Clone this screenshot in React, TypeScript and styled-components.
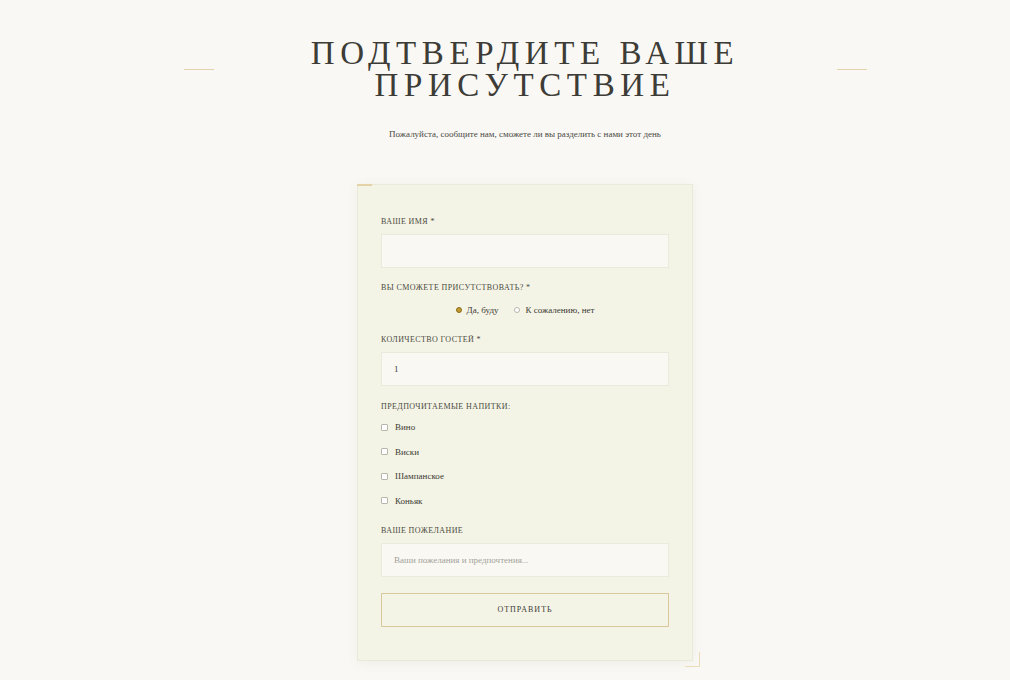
import React from "react";
import styled, { createGlobalStyle } from "styled-components";

const Global = createGlobalStyle`
  html, body { margin: 0; padding: 0; background: #f9f8f4; }
  body { font-family: "Liberation Serif", "Times New Roman", serif; color: #3b3a35; }
  * { box-sizing: border-box; }
`;

const Page = styled.main`
  min-height: 680px;
  padding: 37px 0 0 40px;
  display: flex;
  flex-direction: column;
  align-items: center;
`;

const Header = styled.header`
  display: flex;
  align-items: center;
  gap: 30px;
`;

const Rule = styled.span`
  display: block;
  width: 30px;
  height: 1px;
  background: #e2d3ac;
`;

const Title = styled.h1`
  margin: 0;
  width: 563px;
  text-align: center;
  font-family: "Liberation Serif", serif;
  font-weight: 400;
  font-size: 33px;
  line-height: 32px;
  letter-spacing: 5.6px;
  text-transform: uppercase;
  color: #3d3c37;
`;

const Subtitle = styled.p`
  margin: 26px 0 0;
  font-size: 9px;
  line-height: 14px;
  color: #4a4a44;
`;

const Card = styled.form`
  position: relative;
  margin-top: 43px;
  width: 336px;
  background: #f4f4e6;
  border: 1px solid #ebe9dc;
  box-shadow: 0 2px 10px rgba(120, 110, 80, 0.08);
  padding: 32px 23px 33px;
  display: flex;
  flex-direction: column;

  &::before {
    content: "";
    position: absolute;
    left: -1px;
    top: -1px;
    width: 15px;
    height: 2px;
    background: #e3d3a6;
  }
  &::after {
    content: "";
    position: absolute;
    right: -8px;
    bottom: -7px;
    width: 14px;
    height: 14px;
    border-right: 1px solid #eadcb8;
    border-bottom: 1px solid #eadcb8;
  }
`;

const Group = styled.div<{ $gap?: number }>`
  display: flex;
  flex-direction: column;
  margin-bottom: ${(p) => p.$gap ?? 15}px;
`;

const Label = styled.label`
  font-size: 8px;
  line-height: 10px;
  letter-spacing: 0.4px;
  text-transform: uppercase;
  color: #4a4a40;
  margin-bottom: 7px;
`;

const Field = styled.div<{ $placeholder?: boolean }>`
  height: 34px;
  background: #f9f8f3;
  border: 1px solid #ebe9dc;
  padding: 0 12px;
  display: flex;
  align-items: center;
  font-size: 9px;
  color: ${(p) => (p.$placeholder ? "#a3a29a" : "#3b3a35")};
`;

const RadioRow = styled.div`
  margin-top: 3px;
  display: flex;
  justify-content: center;
  gap: 16px;
  height: 14px;
  align-items: center;
`;

const Option = styled.span`
  display: inline-flex;
  align-items: center;
  gap: 5px;
  font-size: 9px;
  color: #3b3a35;
`;

const Radio = styled.span<{ $on?: boolean }>`
  width: 6px;
  height: 6px;
  border-radius: 50%;
  border: 1px solid ${(p) => (p.$on ? "#8a6f1e" : "#b8b6ad")};
  background: ${(p) => (p.$on ? "#c29a2e" : "#fff")};
`;

const Checks = styled.div`
  margin-top: 1px;
  display: flex;
  flex-direction: column;
  gap: 10.5px;
  padding-bottom: 3px;
`;

const Check = styled.span`
  width: 7px;
  height: 7px;
  border: 1px solid #b8b6ad;
  border-radius: 1px;
  background: #fff;
`;

const CheckRow = styled.div`
  display: flex;
  align-items: center;
  gap: 7px;
  height: 14px;
  font-size: 9px;
  color: #3b3a35;
`;

const Button = styled.button`
  height: 34px;
  background: transparent;
  border: 1px solid #d9c89b;
  font-family: "Liberation Serif", serif;
  font-size: 8px;
  letter-spacing: 1px;
  color: #3b3a35;
  text-transform: uppercase;
`;

export default function App() {
  return (
    <>
      <Global />
      <Page>
        <Header>
          <Rule />
          <Title>Подтвердите ваше присутствие</Title>
          <Rule />
        </Header>
        <Subtitle>Пожалуйста, сообщите нам, сможете ли вы разделить с нами этот день</Subtitle>
        <Card onSubmit={(e) => e.preventDefault()}>
          <Group>
            <Label>Ваше имя *</Label>
            <Field />
          </Group>
          <Group $gap={18}>
            <Label>Вы сможете присутствовать? *</Label>
            <RadioRow>
              <Option>
                <Radio $on />
                Да, буду
              </Option>
              <Option>
                <Radio />
                К сожалению, нет
              </Option>
            </RadioRow>
          </Group>
          <Group $gap={16}>
            <Label>Количество гостей *</Label>
            <Field>1</Field>
          </Group>
          <Group>
            <Label>Предпочитаемые напитки:</Label>
            <Checks>
              {["Вино", "Виски", "Шампанское", "Коньяк"].map((d) => (
                <CheckRow key={d}>
                  <Check />
                  {d}
                </CheckRow>
              ))}
            </Checks>
          </Group>
          <Group $gap={16}>
            <Label>Ваше пожелание</Label>
            <Field $placeholder>Ваши пожелания и предпочтения...</Field>
          </Group>
          <Button type="submit">Отправить</Button>
        </Card>
      </Page>
    </>
  );
}
